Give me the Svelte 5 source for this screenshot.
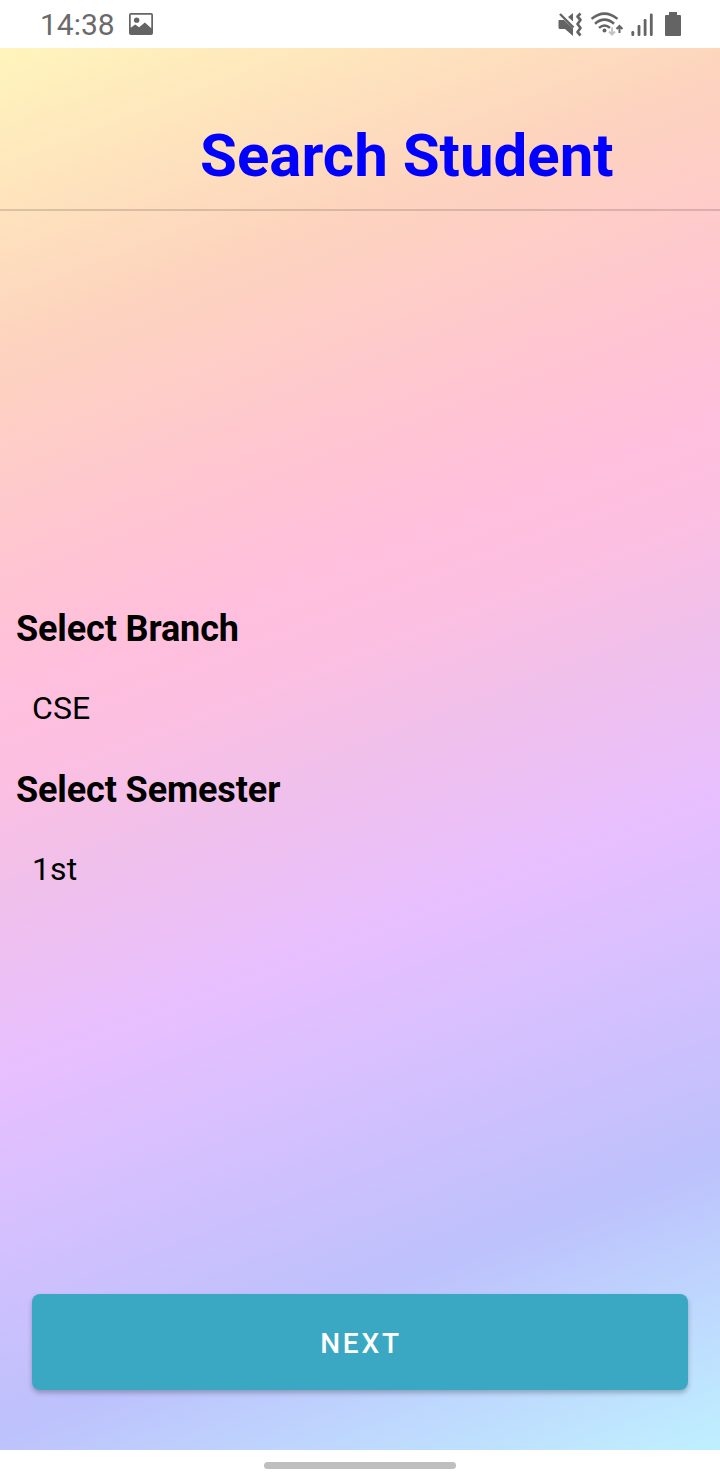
<script>
  const fields = [
    { label: 'Select Branch', value: 'CSE' },
    { label: 'Select Semester', value: '1st' },
  ];
</script>

<div class="screen">
  <header class="status">
    <span class="time">14:38</span>
    <svg class="picture" width="24" height="22" viewBox="0 0 25 23" preserveAspectRatio="none">
      <path fill="#646464" fill-rule="evenodd" d="M2 0H23Q25 0 25 2V21Q25 23 23 23H2Q0 23 0 21V2Q0 0 2 0ZM1.8 1.8V15.5L6.5 12L10.5 15L16.5 10L23.2 16V1.8Z" />
      <circle cx="8" cy="7.5" r="2.8" fill="#646464" />
    </svg>
    <svg class="indicators" width="124" height="26" viewBox="0 0 124 26" fill="#646464">
      <path d="M1 8H6L15 16.5V24L7 17H2Q0.5 17 0.5 15.5V9Q0.5 8 1 8ZM10 5L15 1V9.5Z" />
      <path d="M2 2L15.5 15.5" stroke="#646464" stroke-width="2.4" />
      <path d="M22.5 1.5L19.5 4.5L22.5 8L19.5 12L22.5 16L19.5 20L22.5 23.5" fill="none" stroke="#646464" stroke-width="2.7" stroke-linejoin="round" />
      <g fill="none" stroke="#646464" stroke-width="2.5">
        <path d="M33.5 6.9Q46.5 -3.7 59.5 6.9M37 11.7Q46.5 3.5 56 11.7M41 15.9Q46.5 11 52 15.9" />
      </g>
      <circle cx="46.5" cy="18.5" r="2" />
      <path d="M54 15.5V23M51 19.5L54 22.5L57 19.5" fill="none" stroke="#c4c4c4" stroke-width="2" />
      <path d="M61.5 21V14M58.5 17L61.5 14L64.5 17" fill="none" stroke="#646464" stroke-width="2" />
      <rect x="73.4" y="19" width="2.8" height="5" rx="1.2" />
      <rect x="79.6" y="13" width="2.8" height="11" rx="1.2" />
      <rect x="85.7" y="7" width="2.8" height="17" rx="1.2" />
      <rect x="91.9" y="1.5" width="2.8" height="22.5" rx="1.2" />
      <path d="M111 0H119V3H122Q123 3 123 4V23Q123 24 122 24H108Q107 24 107 23V4Q107 3 108 3H111Z" />
    </svg>
  </header>

  <main>
    <h1>Search Student</h1>
    <section class="form">
      {#each fields as field}
        <div class="field">
          <h2>{field.label}</h2>
          <div class="value">{field.value}</div>
        </div>
      {/each}
    </section>
    <button>NEXT</button>
  </main>

  <footer><div class="handle"></div></footer>
</div>

<style>
  .screen {
    width: 720px;
    height: 1480px;
    display: flex;
    flex-direction: column;
    background: #fff;
    font-family: Roboto, sans-serif;
    color: #000;
  }
  .status {
    height: 48px;
    box-sizing: border-box;
    padding: 0 38px 0 40px;
    display: flex;
    align-items: center;
  }
  .time {
    font-size: 30px;
    line-height: 48px;
    color: #6a6a6a;
    padding-top: 2px;
    width: 89px;
  }
  .indicators {
    margin-left: auto;
    margin-top: 2px;
  }
  main {
    height: 1402px;
    display: flex;
    flex-direction: column;
    background: linear-gradient(159deg, #fff5bc 0%, #fdd4be 17.5%, #ffc4d3 32%, #ffbfdd 38.5%, #fcbfe1 43.5%, #f1c0ea 50%, #e7bfff 61.5%, #bdc1fc 82.5%, #bff0ff 100%);
  }
  h1 {
    margin: 0;
    height: 163px;
    box-sizing: border-box;
    padding: 73px 0 0 200px;
    border-bottom: 2px solid rgba(0, 0, 0, 0.14);
    font-size: 60px;
    line-height: 70px;
    font-weight: 700;
    color: #00f;
  }
  .form {
    padding-top: 397px;
    height: 686px;
  }
  .field {
    height: 161px;
  }
  h2 {
    margin: 0;
    padding-left: 16px;
    font-size: 36px;
    line-height: 42px;
    font-weight: 700;
    letter-spacing: -0.12px;
  }
  .value {
    padding: 39px 0 0 32px;
    font-size: 32px;
    line-height: 38px;
    letter-spacing: 0.1px;
  }
  button {
    margin: 0 32px;
    height: 96px;
    padding: 4px 0 0 2px;
    border: 0;
    border-radius: 8px;
    background: #3ba8c3;
    box-shadow: 0 3px 5px rgba(0, 0, 0, 0.25);
    color: #fff;
    font: 500 28px/32px Roboto, sans-serif;
    letter-spacing: 2.8px;
  }
  footer {
    height: 30px;
    display: flex;
    justify-content: center;
    align-items: center;
  }
  .handle {
    width: 192px;
    height: 7px;
    border-radius: 4px;
    background: #bfbfbf;
  }
</style>
